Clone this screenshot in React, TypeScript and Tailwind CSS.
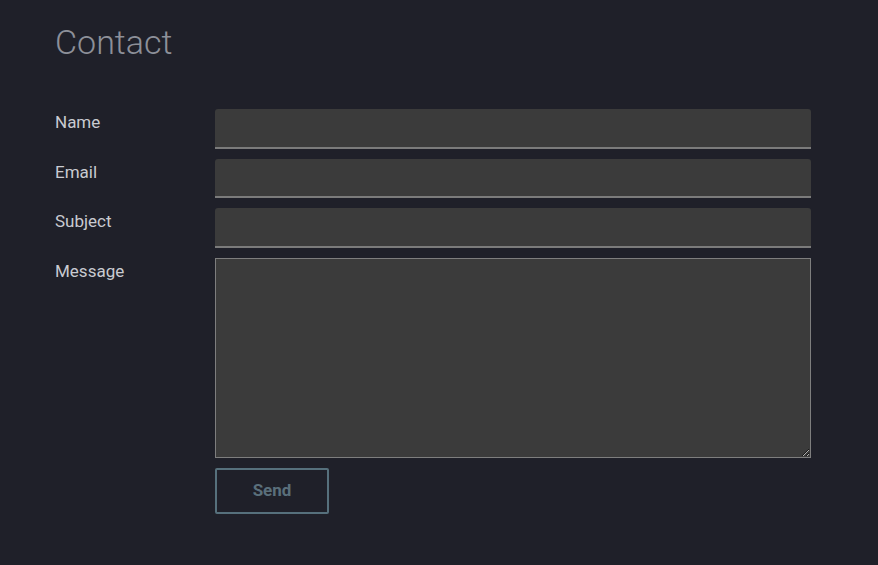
export default function App() {
  const fields = ["Name", "Email", "Subject"];

  return (
    <div className="min-h-[565px] w-full bg-[#1f2029] pl-[55px] pt-[20px] font-['Roboto',sans-serif]">
      <h1 className="text-[34px] font-light leading-[44px] text-[#8d9099]">Contact</h1>

      <form className="mt-[45px] flex w-[756px] flex-col gap-[10px]">
        {fields.map((f) => (
          <div key={f} className="flex">
            <label className="w-[160px] pt-[1px] text-[17px] leading-[24px] text-[#c9cbd1]">{f}</label>
            <input
              type="text"
              className="h-[39.6px] flex-1 rounded-t-[3px] border-b-2 border-[#7b7b7b] bg-[#3b3b3b] outline-none"
            />
          </div>
        ))}
        <div className="flex">
          <label className="w-[160px] pt-[1px] text-[17px] leading-[24px] text-[#c9cbd1]">Message</label>
          <textarea className="h-[200px] flex-1 border border-[#7e7e7e] bg-[#3b3b3b] outline-none" />
        </div>
        <div className="flex">
          <div className="w-[160px]" />
          <button
            type="button"
            className="h-[46px] w-[114px] rounded-[2px] border-2 border-[#56707c] text-[17px] font-bold text-[#5a6f7b]"
          >
            Send
          </button>
        </div>
      </form>
    </div>
  );
}
